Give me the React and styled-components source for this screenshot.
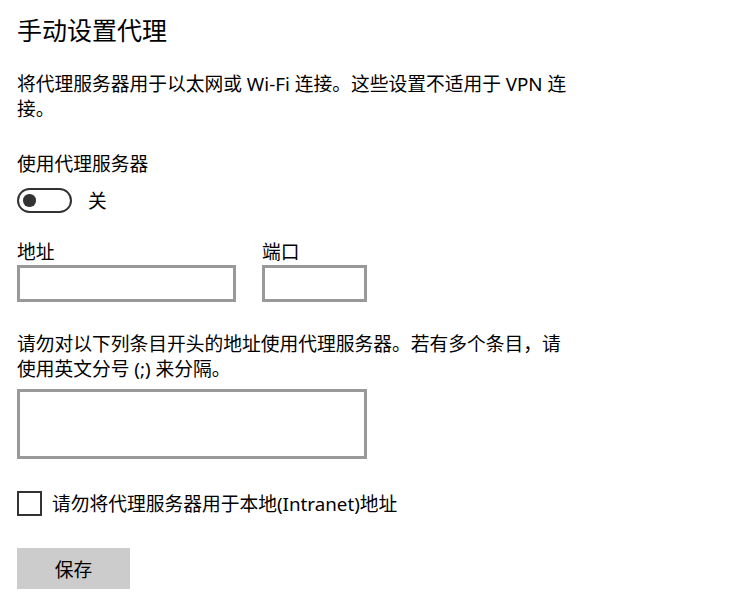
import React, { useState } from "react"
import styled, { createGlobalStyle } from "styled-components"

const GlobalStyle = createGlobalStyle`
    html, body {
        margin: 0;
        padding: 0;
        background: #FFFFFF;
    }
    body {
        font-family: "Noto Sans", "Noto Sans CJK SC", sans-serif;
        color: #000000;
    }
`

const Page = styled.div`
    padding: 13px 0 20px 17px;
    display: flex;
    flex-direction: column;
    align-items: flex-start;
`

const Title = styled.h1`
    margin: 0;
    font-size: 25px;
    line-height: 34px;
    font-weight: 400;
`

const Text = styled.p`
    margin: ${({ top }) => top}px 0 0;
    max-width: 556px;
    font-size: 18.75px;
    line-height: 25px;
`

const ToggleRow = styled.div`
    margin-top: 12px;
    display: flex;
    align-items: center;
    gap: 16px;
    font-size: 18.75px;
    line-height: 25px;
`

const Toggle = styled.button`
    box-sizing: border-box;
    width: 55px;
    height: 25px;
    border: 2.5px solid #333333;
    border-radius: 13px;
    background: #FFFFFF;
    padding: 0 0 0 4px;
    display: flex;
    align-items: center;
    justify-content: ${({ on }) => (on ? "flex-end" : "flex-start")};
    cursor: pointer;
    .knob {
        width: 12.5px;
        height: 12.5px;
        border-radius: 50%;
        background: #333333;
    }
`

const Fields = styled.div`
    margin-top: 26px;
    display: flex;
    gap: 26px;
`

const Field = styled.label`
    display: flex;
    flex-direction: column;
    gap: 1px;
    font-size: 18.75px;
    line-height: 25px;
`

const TextInput = styled.input`
    box-sizing: border-box;
    width: ${({ w }) => w}px;
    height: 37px;
    border: 3px solid #999999;
    outline: none;
    padding: 0 8px;
    font: inherit;
`

const TextArea = styled.textarea`
    box-sizing: border-box;
    margin-top: 8px;
    width: 350px;
    height: 70px;
    border: 3px solid #999999;
    outline: none;
    resize: none;
    padding: 4px 8px;
    font: inherit;
    font-size: 18.75px;
`

const CheckRow = styled.label`
    margin-top: 32px;
    display: flex;
    align-items: center;
    gap: 10px;
    font-size: 18.75px;
    line-height: 25px;
    input {
        appearance: none;
        box-sizing: border-box;
        margin: 0;
        width: 25px;
        height: 25px;
        border: 2.5px solid #333333;
        background: #FFFFFF;
    }
`

const SaveButton = styled.button`
    margin-top: 32px;
    width: 113px;
    height: 41px;
    border: none;
    background: #CCCCCC;
    color: #000000;
    font-family: inherit;
    font-size: 18.75px;
    padding: 0;
`

export default function App() {
    const [proxyOn, setProxyOn] = useState(false)
    return (
        <Page>
            <GlobalStyle />
            <Title>手动设置代理</Title>
            <Text top={24}>将代理服务器用于以太网或 Wi-Fi 连接。这些设置不适用于 VPN 连接。</Text>
            <Text top={30}>使用代理服务器</Text>
            <ToggleRow>
                <Toggle on={proxyOn ? 1 : 0} onClick={() => setProxyOn(!proxyOn)}>
                    <span className="knob" />
                </Toggle>
                <span>{proxyOn ? "开" : "关"}</span>
            </ToggleRow>
            <Fields>
                <Field>
                    地址
                    <TextInput w={219} />
                </Field>
                <Field>
                    端口
                    <TextInput w={105} />
                </Field>
            </Fields>
            <Text top={29}>请勿对以下列条目开头的地址使用代理服务器。若有多个条目，请使用英文分号 (;) 来分隔。</Text>
            <TextArea />
            <CheckRow>
                <input type="checkbox" />
                请勿将代理服务器用于本地(Intranet)地址
            </CheckRow>
            <SaveButton>保存</SaveButton>
        </Page>
    )
}
